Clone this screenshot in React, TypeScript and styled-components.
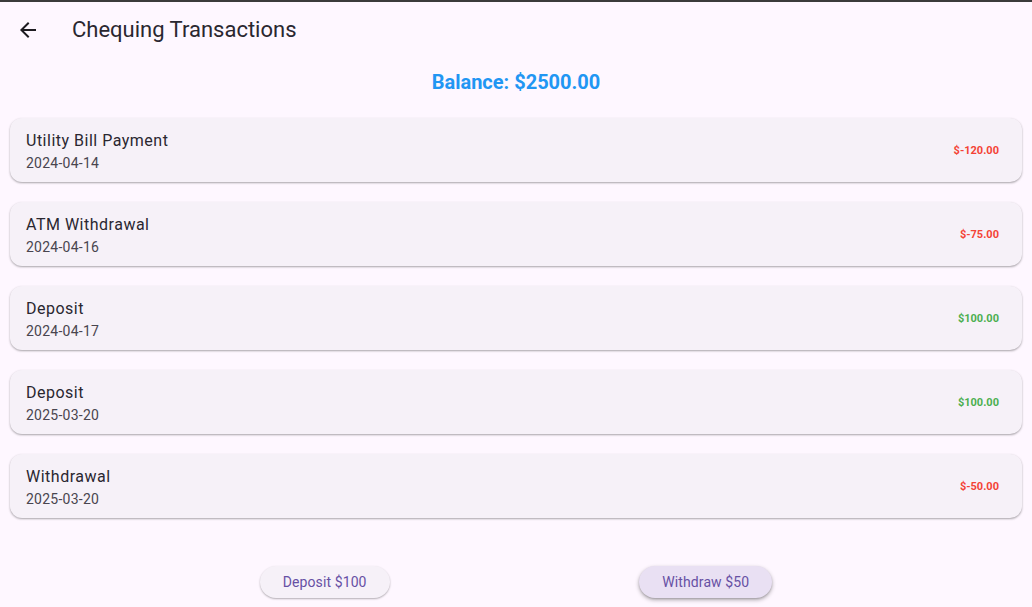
import styled, { createGlobalStyle } from "styled-components";

const GlobalStyle = createGlobalStyle`
  html, body {
    margin: 0;
    padding: 0;
    background: #fef7ff;
    font-family: Roboto, "Noto Sans", sans-serif;
  }
  body {
    border-top: 2px solid #3b3b3b;
  }
`;

type Tx = { title: string; date: string; amount: number };

const transactions: Tx[] = [
  { title: "Utility Bill Payment", date: "2024-04-14", amount: -120 },
  { title: "ATM Withdrawal", date: "2024-04-16", amount: -75 },
  { title: "Deposit", date: "2024-04-17", amount: 100 },
  { title: "Deposit", date: "2025-03-20", amount: 100 },
  { title: "Withdrawal", date: "2025-03-20", amount: -50 },
];

const Page = styled.div`
  min-height: 605px;
  background: #fef7ff;
  display: flex;
  flex-direction: column;
`;

const AppBar = styled.header`
  height: 56px;
  display: flex;
  align-items: center;
`;

const BackButton = styled.button`
  width: 56px;
  height: 56px;
  border: none;
  background: transparent;
  padding: 0;
  display: flex;
  align-items: center;
  justify-content: center;
  color: #1d1b20;
  cursor: pointer;
`;

const Title = styled.h1`
  margin: 0 0 0 16px;
  font-size: 22px;
  font-weight: 400;
  color: #2a2730;
  line-height: 28px;
`;

const Balance = styled.div`
  margin: 12px 0 14px;
  text-align: center;
  font-size: 20px;
  line-height: 24px;
  font-weight: 700;
  color: #2196f3;
`;

const List = styled.div`
  display: flex;
  flex-direction: column;
`;

const Card = styled.div`
  margin: 10px;
  height: 64px;
  box-sizing: border-box;
  padding: 1px 23px 0 16px;
  background: #f6f1f8;
  border-radius: 12px;
  box-shadow: 0 1px 2px rgba(0, 0, 0, 0.28), 0 1px 3px rgba(0, 0, 0, 0.08);
  display: flex;
  align-items: center;
  justify-content: space-between;
`;

const TxInfo = styled.div`
  display: flex;
  flex-direction: column;
`;

const TxTitle = styled.div`
  font-size: 16px;
  line-height: 24px;
  letter-spacing: 0.5px;
  color: #2a2730;
`;

const TxDate = styled.div`
  font-size: 14px;
  line-height: 20px;
  letter-spacing: 0.25px;
  color: #49454f;
`;

const Amount = styled.div<{ $positive: boolean }>`
  font-size: 11px;
  font-weight: 700;
  color: ${(p) => (p.$positive ? "#4caf50" : "#f44336")};
`;

const Actions = styled.div`
  margin-top: 38px;
  padding: 0 10px;
  display: flex;
  justify-content: space-evenly;
`;

const ActionButton = styled.button<{ $active?: boolean }>`
  height: 32px;
  padding: 0 23px;
  border: none;
  border-radius: 16px;
  font-family: Roboto, "Noto Sans", sans-serif;
  font-size: 14px;
  letter-spacing: 0.1px;
  color: #6750a4;
  background: ${(p) => (p.$active ? "#e9e0f3" : "#f6f1f8")};
  box-shadow: ${(p) =>
    p.$active
      ? "0 2px 4px rgba(0, 0, 0, 0.3), 0 1px 2px rgba(0, 0, 0, 0.15)"
      : "0 1px 2px rgba(0, 0, 0, 0.3)"};
  cursor: pointer;
`;

const ArrowBack = () => (
  <svg width="24" height="24" viewBox="0 0 24 24" fill="currentColor">
    <path d="M20 11H7.83l5.59-5.59L12 4l-8 8 8 8 1.41-1.41L7.83 13H20v-2z" />
  </svg>
);

const formatAmount = (n: number) => `$${n.toFixed(2)}`;

export default function App() {
  return (
    <>
      <GlobalStyle />
      <Page>
        <AppBar>
          <BackButton aria-label="Back">
            <ArrowBack />
          </BackButton>
          <Title>Chequing Transactions</Title>
        </AppBar>
        <Balance>Balance: $2500.00</Balance>
        <List>
          {transactions.map((t, i) => (
            <Card key={i}>
              <TxInfo>
                <TxTitle>{t.title}</TxTitle>
                <TxDate>{t.date}</TxDate>
              </TxInfo>
              <Amount $positive={t.amount > 0}>{formatAmount(t.amount)}</Amount>
            </Card>
          ))}
        </List>
        <Actions>
          <ActionButton>Deposit $100</ActionButton>
          <ActionButton $active>Withdraw $50</ActionButton>
        </Actions>
      </Page>
    </>
  );
}
